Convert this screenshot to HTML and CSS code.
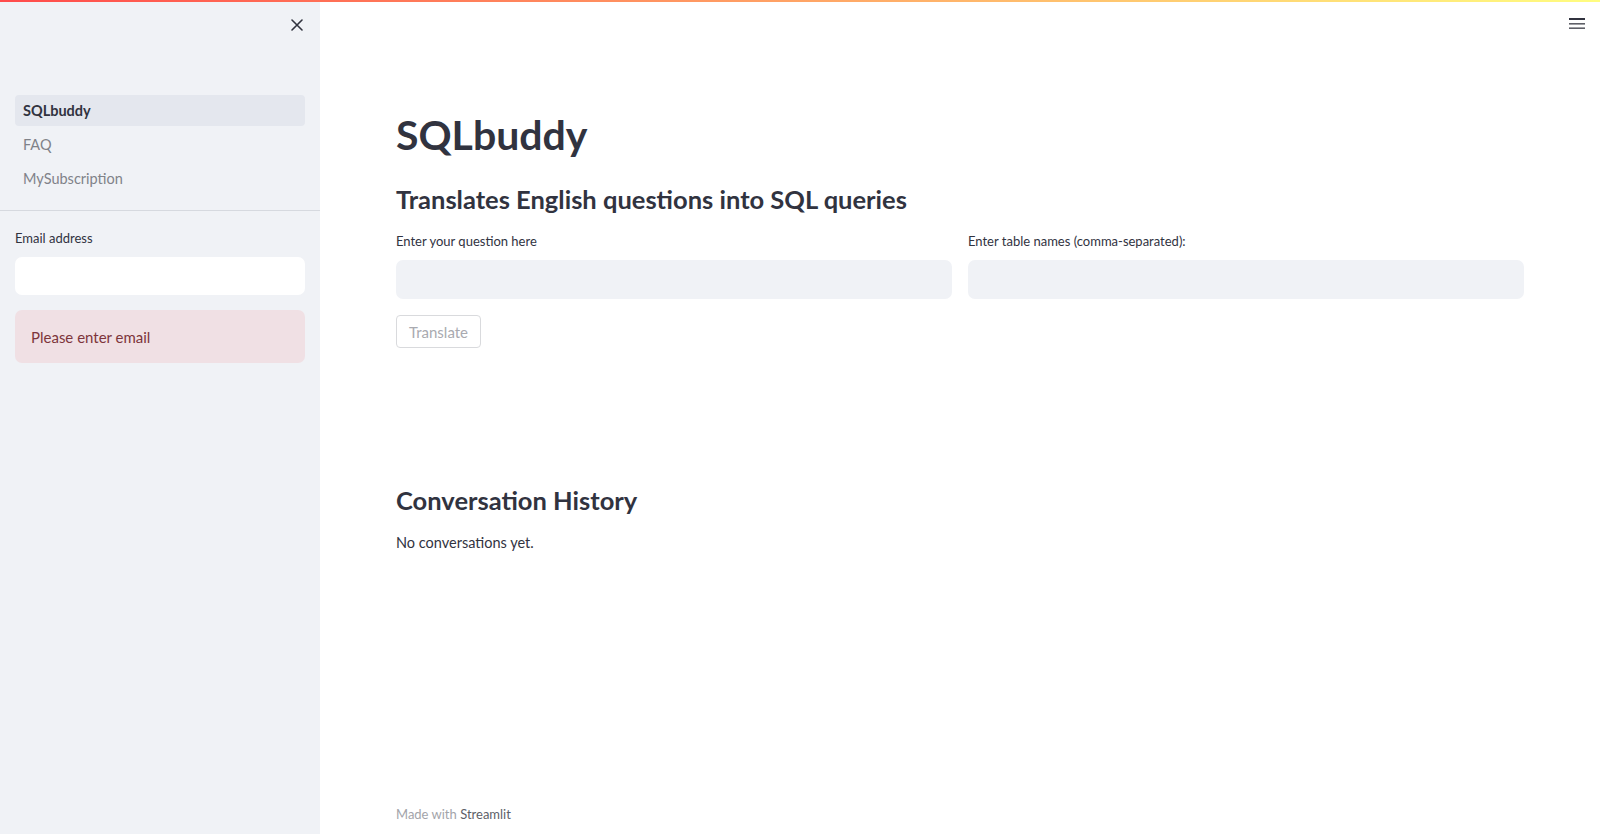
FILE: index.html
```html
<!DOCTYPE html>
<html lang="en">
<head>
<meta charset="utf-8">
<title>SQLbuddy</title>
<link rel="stylesheet" href="styles.css">
</head>
<body>
<div class="decoration"></div>
<header class="toolbar">
  <button class="menu-btn" aria-label="Menu">
    <svg width="16" height="12" viewBox="0 0 16 12"><rect x="0" y="0" width="16" height="2" fill="#31333f"/><rect x="0" y="5" width="16" height="1.6" fill="#5f6068"/><rect x="0" y="9.4" width="16" height="1.6" fill="#5f6068"/></svg>
  </button>
</header>
<div class="app">
  <aside class="sidebar">
    <div class="sidebar-header">
      <button class="close-btn" aria-label="Close sidebar">
        <svg width="12" height="12" viewBox="0 0 12 12"><path d="M1 1 L11 11 M11 1 L1 11" stroke="#31333f" stroke-width="1.6" stroke-linecap="round"/></svg>
      </button>
    </div>
    <nav class="nav">
      <a class="nav-item active">SQLbuddy</a>
      <a class="nav-item">FAQ</a>
      <a class="nav-item">MySubscription</a>
    </nav>
    <div class="sidebar-content">
      <label class="field-label">Email address</label>
      <div class="input input-white"></div>
      <div class="alert">Please enter email</div>
    </div>
  </aside>
  <main class="main">
    <h1 class="title">SQLbuddy</h1>
    <h3 class="subheader">Translates English questions into SQL queries</h3>
    <div class="columns">
      <div class="col">
        <label class="field-label">Enter your question here</label>
        <div class="input"></div>
      </div>
      <div class="col">
        <label class="field-label">Enter table names (comma-separated):</label>
        <div class="input"></div>
      </div>
    </div>
    <div class="btn-row"><button class="btn">Translate</button></div>
    <h3 class="subheader history">Conversation History</h3>
    <p class="text">No conversations yet.</p>
    <footer class="footer">Made with <span class="brand">Streamlit</span></footer>
  </main>
</div>
</body>
</html>
```

FILE: styles.css
```css
* { box-sizing: border-box; }
html, body { margin: 0; padding: 0; }
body {
  font-family: Lato, "Open Sans", sans-serif;
  color: #31333f;
  background: #ffffff;
  width: 1600px;
  height: 834px;
  overflow: hidden;
}
button { font-family: inherit; }
.decoration {
  position: fixed;
  top: 0; left: 0; right: 0;
  height: 2px;
  background: linear-gradient(90deg, #ff4b4b, #fffd80);
  z-index: 10;
}
.toolbar {
  position: fixed;
  top: 0; right: 0;
  height: 48px;
  display: flex;
  align-items: center;
  padding-right: 15px;
  z-index: 5;
}
.menu-btn {
  border: 0; background: transparent; padding: 0;
  width: 16px; height: 12px;
  display: flex;
}
.app { display: flex; height: 834px; }
.sidebar {
  width: 320px;
  flex: 0 0 320px;
  background: #f0f2f6;
  display: flex;
  flex-direction: column;
}
.sidebar-header {
  height: 95px;
  display: flex;
  justify-content: flex-end;
  align-items: flex-start;
  padding: 19px 17px 0 0;
}
.close-btn {
  border: 0; background: transparent; padding: 0;
  width: 12px; height: 12px; display: flex;
}
.nav {
  display: flex;
  flex-direction: column;
  gap: 3px;
  padding: 0 15px 16px;
  border-bottom: 1px solid #d6d9df;
}
.nav-item {
  height: 31px;
  display: flex;
  align-items: center;
  padding-left: 8px;
  border-radius: 4px;
  font-size: 14.5px;
  color: #808289;
}
.nav-item.active {
  background: #e4e7ee;
  color: #31333f;
  font-weight: 700;
}
.sidebar-content {
  padding: 17px 15px 0;
  display: flex;
  flex-direction: column;
}
.field-label {
  display: block;
  font-size: 13px;
  line-height: 20px;
  margin-bottom: 9px;
}
.input {
  height: 39px;
  border-radius: 7px;
  background: #f0f2f6;
}
.input-white { background: #ffffff; height: 38px; }
.alert {
  margin-top: 15px;
  height: 53px;
  border-radius: 7px;
  background: #f0e0e4;
  color: #7d353b;
  font-size: 15px;
  display: flex;
  align-items: center;
  padding-left: 16px;
}
.main {
  flex: 1;
  padding: 0 76px;
  display: flex;
  flex-direction: column;
}
.title {
  margin: 109px 0 0;
  font-size: 41px;
  line-height: 52px;
  font-weight: 700;
}
.subheader {
  margin: 21px 0 0;
  font-size: 25.5px;
  line-height: 34px;
  font-weight: 700;
}
.columns {
  display: flex;
  gap: 16px;
  margin-top: 15px;
}
.col { flex: 1; display: flex; flex-direction: column; }
.btn-row { margin-top: 16px; display: flex; }
.btn {
  height: 33px;
  padding: 0 12px;
  border: 1px solid #d9dadd;
  border-radius: 4px;
  background: #fff;
  color: #a9aab0;
  font-size: 15px;
}
.history { margin-top: 135px; }
.text { margin: 15px 0 0; font-size: 14.5px; line-height: 22px; }
.footer {
  margin-top: auto;
  margin-bottom: 12px;
  font-size: 13px;
  color: #a3a4aa;
}
.brand { color: #5d5f68; }
```
